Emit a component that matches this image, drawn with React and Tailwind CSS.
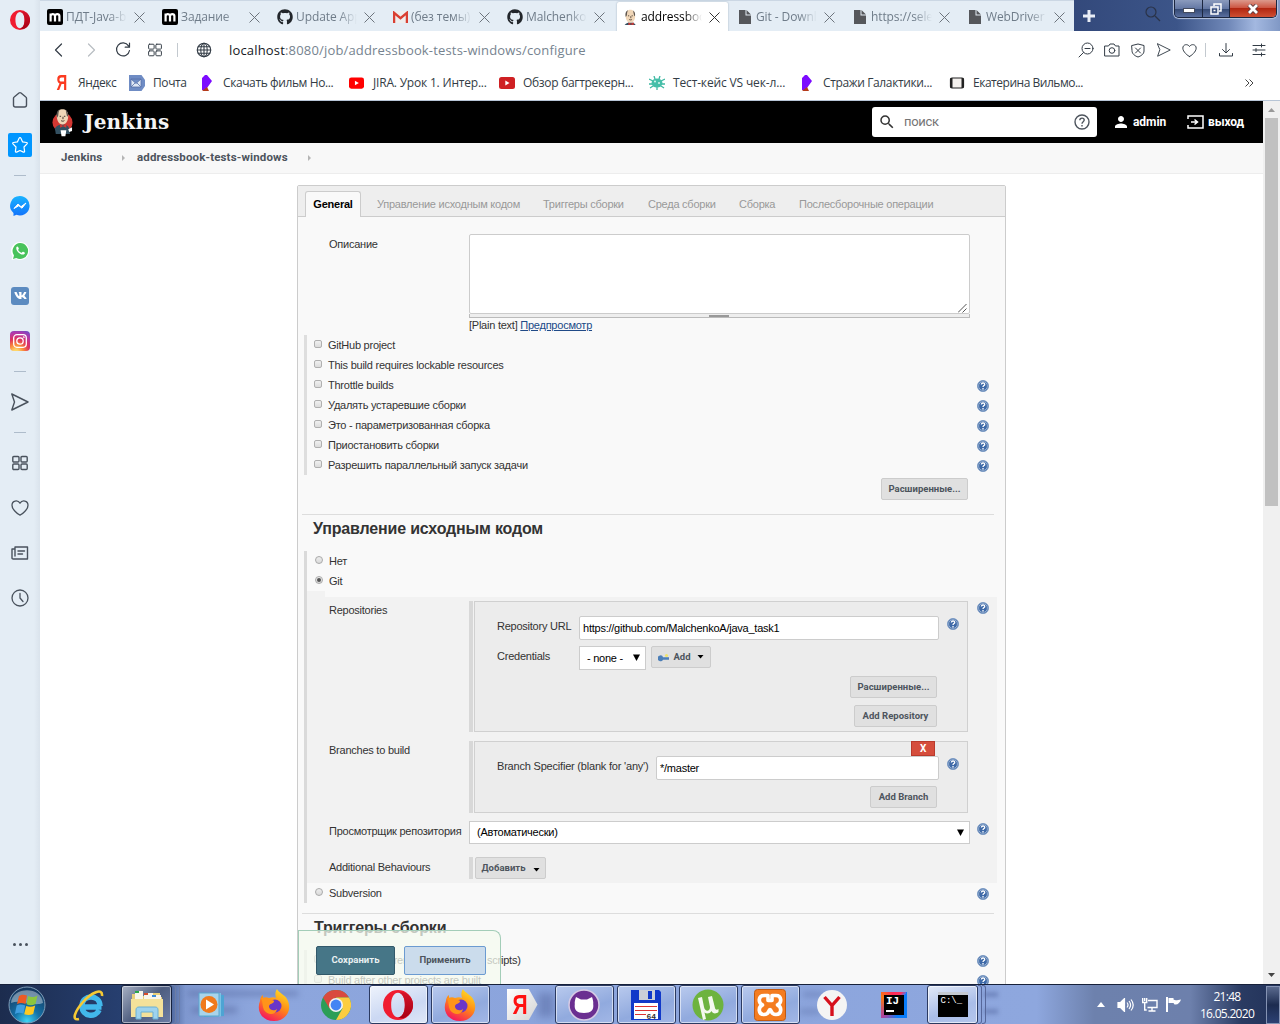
import React from "react";
import { FaGithub, FaVk } from "react-icons/fa";
import { MdPerson, MdSearch } from "react-icons/md";

const UI = "font-['Open_Sans','Noto_Sans',sans-serif]";

/* ---------- browser icons ---------- */

function Line({ size = 18, w = 1, className = "", children }) {
  return (
    <svg width={size} height={size} viewBox="0 0 18 18" fill="none" stroke="currentColor" strokeWidth={w} strokeLinecap="round" strokeLinejoin="round" className={"shrink-0 " + className}>
      {children}
    </svg>
  );
}

const shapes = {
  home: <path d="M2.500 7.200Q2.500 6.500 3.200 6L8 2q1-.7 2 0l4.800 4q.7.500.7 1.200v6.800a2 2 0 0 1-2 2h-9a2 2 0 0 1-2-2z" />,
  star: <path d="M9 1.500q.6 0 .9.700l1.600 3.600 4 .7q1.300.4.5 1.300l-3 3.200.6 4.300q0 1.200-1.200.8L9 14.500l-3.400 1.600q-1.200.4-1.200-.8l.6-4.300-3-3.200q-.8-.9.500-1.300l4-.7 1.600-3.600q.3-.7.9-.7z" />,
  send: <path d="M.8 1 17 9 .8 17l2.700-8z" />,
  grid: (
    <>
      <rect x="1.800" y="2.500" width="6.200" height="5.500" rx="1" />
      <rect x="10" y="2.500" width="6.200" height="5.500" rx="1" />
      <rect x="1.800" y="10" width="6.200" height="5.500" rx="1" />
      <rect x="10" y="10" width="6.200" height="5.500" rx="1" />
    </>
  ),
  heart: <path d="M9 16.200C7 15.500 1 10.500 1 6.200 1 1.500 6.800.6 9 4.200 11.200.6 17 1.500 17 6.200c0 4.300-6 9.300-8 10z" />,
  news: <path d="M4 3h12.500v12H2.200C1.500 15 1 14.500 1 14V5h3zM4 5v7M7 7h6.500M7 10h4.500" />,
  clock: (
    <>
      <circle cx="9" cy="9" r="8" />
      <path d="M9 4.500V9l3 3.500" />
    </>
  ),
  back: <path d="M11.500 3 5.500 9l6 6" />,
  forward: <path d="M6.500 3l6 6-6 6" />,
  reload: <path d="M14.500 4.800A6.500 6.500 0 1 0 15.500 9.500M15.500 2v4.200h-4.300" />,
  globe: (
    <>
      <circle cx="9" cy="9" r="6.700" />
      <ellipse cx="9" cy="9" rx="3.200" ry="6.700" />
      <path d="M2.300 9h13.400M3.200 5.700h11.600M3.200 12.300h11.600M9 2.300v13.400" />
    </>
  ),
  zoomOut: (
    <>
      <circle cx="10.500" cy="7.500" r="5.500" />
      <path d="M8 7.500h5M6.500 11.500 2 16" />
    </>
  ),
  camera: (
    <>
      <path d="M2 5h3.500L7 3h4l1.500 2H16v10H2z" />
      <circle cx="9" cy="9.500" r="2.800" />
    </>
  ),
  shield: (
    <>
      <path d="M3 4.500 9 3l6 1.500V10c0 3-3 5-6 6-3-1-6-3-6-6z" />
      <path d="M6.500 7l5 5M11.500 7l-5 5" />
    </>
  ),
  download: <path d="M9 2.500v9M5.500 8.500 9 12l3.500-3.500M2.500 12.500V15h13v-2.500" />,
  sliders: <path d="M3 4.500h12M3 9h12M3 13.500h12M11.500 3v3M6 7.500v3M11.500 12v3" />,
};

function OperaLogo({ size, id }) {
  return (
    <svg width={size} height={size} viewBox="0 0 32 32">
      <defs>
        <linearGradient id={id} x1="0" y1="0" x2="0" y2="1">
          <stop offset="0" stopColor="#d5142a" />
          <stop offset="1" stopColor="#a70014" />
        </linearGradient>
      </defs>
      <path fillRule="evenodd" fill="#f01c30" d="M16 0a16 16 0 1 0 0 32 16 16 0 0 0 0-32M16 3c5 0 7.300 6 7.300 13S21 29 16 29 8.700 23 8.700 16 11 3 16 3" />
      <path fill={"url(#" + id + ")"} d="M16 3c4-1.500 8-.5 10.500 1.500C34 11 34 21 26.500 27.500 23 30.500 19 31 16 29c5 0 7.300-6 7.300-13S21 3 16 3" />
    </svg>
  );
}

function MTile() {
  return (
    <span className="flex h-4 w-4 items-center justify-center rounded-[2px] bg-black">
      <svg width="12" height="10" viewBox="0 0 12 10" fill="none" stroke="#fff" strokeWidth="2.200">
        <path d="M1.600 9.500V1.500M1.600 4c0-2.500 4.400-2.500 4.400 0v5.500M6 4c0-2.500 4.400-2.500 4.400 0v5.500" />
      </svg>
    </span>
  );
}

function Gmail() {
  return (
    <svg width="15" height="12" viewBox="0 0 15 12" className="ml-px">
      <rect width="15" height="12" rx="1" fill="#eee" />
      <path d="M1.100 12V1.800l6.400 5.400 6.400-5.400V12" fill="none" stroke="#d93f32" strokeWidth="2.300" />
    </svg>
  );
}

function PageIcon() {
  return (
    <svg width="12" height="14" viewBox="0 0 12 14" className="ml-[2px]" fill="#55575b">
      <path d="M0 0h6.500v5.500H12V14H0zM7.500 0 12 4.500H7.500z" />
    </svg>
  );
}

function Butler({ width = 22, height = 30, crop }) {
  return (
    <svg width={width} height={height} viewBox={crop ? "2 0 17 20" : "0 0 22 30"}>
      {!crop && <circle cx="11" cy="15" r="10.500" fill="#d33833" />}
      <path d="M3 21c2-3 5-4 8-4s6 1 7 4l1 6H4z" fill="#335061" />
      <path d="M5 8C5 3 8 1 11 1s6 2 6 7c0 5-2 9-6 9S5 13 5 8" fill="#f0d6b7" />
      <path d="M5.300 10C4 5 6 2 8 1.500 6.500 4 7 6 6.500 8zM16.500 9c1-3 0-5-2-7 0 3 1 4 1 6z" fill="#5d5650" />
      <path d="M8 8.500h1.500M12.500 8.500H14M9.500 13c1 .8 2.500.8 3.500 0M11.500 9v2.500" stroke="#2b211b" strokeWidth=".9" fill="none" />
      <path d="M8.500 17l3 1.500 3.500-2v4L11.500 19l-3 1.500z" fill="#d33833" />
      <path d="M9 23h6l-1 6.500h-4zM17 22l4-2v4l-3 1z" fill="#fff" />
    </svg>
  );
}

/* ---------- tab strip ---------- */

const tabs = [
  ["m", "ПДТ-Java-b"],
  ["m", "Задание"],
  ["gh", "Update App"],
  ["gmail", "(без темы)"],
  ["gh", "Malchenko/"],
  ["jenkins", "addressboo"],
  ["page", "Git - Downl"],
  ["page", "https://sele"],
  ["page", "WebDriver"],
];

function TabGlyph({ kind }) {
  if (kind === "m") return <MTile />;
  if (kind === "gh") return <FaGithub size={16} color="#22262b" />;
  if (kind === "gmail") return <Gmail />;
  if (kind === "jenkins") return <Butler width={14} height={16} crop />;
  return <PageIcon />;
}

function BrowserTab({ kind, label, active, sep }) {
  return (
    <div className={"flex w-[115px] shrink-0 pt-px " + (active ? "pl-[2px]" : "")}>
      <div className={"flex h-[30px] w-full items-center overflow-hidden " + (active ? "mr-[2px] rounded-t-[2px] bg-white pl-[6px] shadow-[0_0_2px_#9ab]" : "pl-[7px]")}>
        <span className={"flex h-5 shrink-0 items-center overflow-hidden " + (active ? "w-[15px]" : "w-[16px]")}>
          <TabGlyph kind={kind} />
        </span>
        <span className={"ml-[3px] w-[61px] shrink-0 overflow-hidden whitespace-nowrap text-[12px] tracking-[-0.1px] mask-r-from-70% " + (active ? "text-black" : "text-[#6f7c89]")}>{label}</span>
        <svg width="11" height="11" viewBox="0 0 11 11" className={"ml-[7px] shrink-0 " + (active ? "text-[#333]" : "text-[#6d747c]")} stroke="currentColor" fill="none">
          <path d="M.5.5l10 10M10.500.5l-10 10" />
        </svg>
        {sep && <span className="ml-[10px] h-4 w-px shrink-0 bg-[#a9b6c3]" />}
      </div>
    </div>
  );
}

function TabStrip() {
  return (
    <div className="flex h-[31px] bg-[#3d5689]">
      <div className="flex w-[1034px] border-t border-[#cbd7e4] bg-[#e4edf5]">
        {tabs.map(([kind, label], i) => (
          <BrowserTab key={i} kind={kind} label={label} active={i === 5} sep={i !== 4 && i !== 5 && i !== 8} />
        ))}
      </div>
      <div className="flex flex-1 bg-[linear-gradient(90deg,#33497b,#3c5589_50%,#7088b8_75%,#a3b8e0_88%,#8098c5)]">
        <svg width="12" height="12" viewBox="0 0 12 12" className="mt-[10px] ml-[9px]" stroke="#e9eef6" strokeWidth="3">
          <path d="M6 0v12M0 6h12" />
        </svg>
        <svg width="16" height="16" viewBox="0 0 16 16" className="mt-[6px] ml-[50px]" fill="none" stroke="#2a3348" strokeWidth="1.200">
          <circle cx="6" cy="6" r="5" />
          <path d="M10 10l5 5" />
        </svg>
        <div className="ml-[13px] flex h-[18px] w-[103px] overflow-hidden rounded-b-[5px] border border-t-0 border-[#1c2740] shadow-[0_0_1px_1px_#b9c6df]">
          <span className="flex w-[28px] items-center justify-center border-r border-[#1c2740] bg-[linear-gradient(#8b9bbd,#6478a4_50%,#324771_51%,#5a6f9f)] pt-[3px]">
            <span className="h-[5px] w-[12px] border border-[#444b5e] bg-white" />
          </span>
          <span className="flex w-[27px] items-center justify-center border-r border-[#1c2740] bg-[linear-gradient(#8b9bbd,#6478a4_50%,#324771_51%,#5a6f9f)]">
            <svg width="12" height="12" viewBox="0 0 12 12" fill="none" stroke="#fff" strokeWidth="1.500">
              <path d="M4 3V1h7v7H9" />
              <rect x="1" y="4" width="7" height="7" />
              <path d="M3.500 7.500h2" />
            </svg>
          </span>
          <span className="flex flex-1 items-center justify-center bg-[linear-gradient(#dc9a8c,#cd5743_45%,#b22711_50%,#cf4f33)]">
            <svg width="12" height="10" viewBox="0 0 12 10" fill="none">
              <path d="M2 1l8 8M10 1 2 9" stroke="#5b3b40" strokeWidth="4.500" />
              <path d="M2 1l8 8M10 1 2 9" stroke="#fff" strokeWidth="2.800" />
            </svg>
          </span>
        </div>
      </div>
    </div>
  );
}

/* ---------- address and bookmarks ---------- */

function AddressBar() {
  return (
    <div className="flex h-[38px] items-center bg-white pl-[10px] text-[#333c46]">
      <Line w={1.2}>{shapes.back}</Line>
      <Line w={1.2} className="ml-[14px] text-[#b8bdc2]">{shapes.forward}</Line>
      <Line w={1.2} className="ml-[14px]">{shapes.reload}</Line>
      <Line size={16} w={1.1} className="ml-[15px]">{shapes.grid}</Line>
      <span className="ml-[14px] h-[14px] w-px bg-[#c3c9cf]" />
      <Line w={1.1} className="ml-[17px]">{shapes.globe}</Line>
      <span className="ml-[16px] text-[13px] leading-[18px] tracking-[0.17px] whitespace-nowrap text-[#76838f]">
        <span className="text-[#15191d]">localhost</span>:8080/job/addressbook-tests-windows/configure
      </span>
      <div className="ml-auto flex items-center pr-[12px]">
        <Line>{shapes.zoomOut}</Line>
        <Line className="ml-[8px]">{shapes.camera}</Line>
        <Line className="ml-[8px]">{shapes.shield}</Line>
        <Line size={14} w={1.2} className="ml-[10px]">{shapes.send}</Line>
        <Line size={15} w={1.2} className="ml-[11px]">{shapes.heart}</Line>
        <span className="ml-[8px] h-[14px] w-px bg-[#c3c9cf]" />
        <Line className="ml-[11px]">{shapes.download}</Line>
        <Line className="ml-[15px]">{shapes.sliders}</Line>
      </div>
    </div>
  );
}

function PurpleMark() {
  return (
    <svg width="16" height="16" viewBox="0 0 16 16">
      <path d="M3 3 6 0h2l5 6-5 7-1 2H3z" fill="#7c0bff" />
      <path d="M3 16l5-4 2 4z" fill="#b53a1b" />
    </svg>
  );
}

function YouTube({ color, w }) {
  return (
    <svg width={w} height="12" viewBox="0 0 16 12">
      <rect width="16" height="12" rx="2.500" fill={color} />
      <path d="M6.300 3.500v5l4.200-2.500z" fill="#fff" />
    </svg>
  );
}

const bookmarks = [
  ["Яндекс", "w-[75px]", "tracking-[-0.4px]", <span className="inline-block scale-x-[.68] font-['Liberation_Sans',sans-serif] text-[22px] leading-4 font-bold text-[#fb3a20]">Я</span>],
  ["Почта", "w-[70px]", "tracking-[-0.4px]", (
    <svg width="16" height="16" viewBox="0 0 16 16">
      <path d="M0 0h12.500L16 5v6l-3.500 5H0z" fill="#6f8cc4" />
      <path d="M2 4h10v8H2zM2 4l5 4.500L12 4M2 12l4-4M12 12 8 8" fill="#dfe7f4" stroke="#5570a8" strokeWidth=".8" />
    </svg>
  )],
  ["Скачать фильм Но...", "w-[150px]", "tracking-[-0.4px]", <PurpleMark />],
  ["JIRA. Урок 1. Интер...", "w-[150px]", "tracking-[-0.2px]", <YouTube color="#f00" w={15} />],
  ["Обзор багтрекерн...", "w-[150px]", "tracking-[-0.3px]", <YouTube color="#cf2023" w={16} />],
  ["Тест-кейс VS чек-л...", "w-[150px]", "tracking-[-0.15px]", (
    <svg width="16" height="14" viewBox="0 0 16 14" stroke="#3fb8a2" strokeWidth="1.300">
      <path d="M0 3l4 2M0 8h4M1 12l3-2M16 3l-4 2M16 8h-4M15 12l-3-2M5 0l1 3M11 0l-1 3M8 11v3" />
      <ellipse cx="8" cy="7" rx="5.500" ry="4.500" fill="#45bfa9" stroke="none" />
      <circle cx="6" cy="5.500" r="1" fill="#d8f4ee" stroke="none" />
      <circle cx="10" cy="7" r="1" fill="#d8f4ee" stroke="none" />
    </svg>
  )],
  ["Стражи Галактики...", "w-[150px]", "tracking-[-0.37px]", <PurpleMark />],
  ["Екатерина Вильмо...", "w-[150px]", "tracking-[-0.48px]", (
    <svg width="16" height="14" viewBox="0 0 16 14">
      <rect x="1.500" y="2" width="13" height="10" rx="1.500" fill="#f4f1ee" stroke="#222" strokeWidth="1.200" />
      <path d="M2.500 2v10M13.500 2v10" stroke="#222" strokeWidth="2" />
    </svg>
  )],
];

function Bookmarks() {
  return (
    <div className="flex h-[32px] items-center border-b border-[#b7c5d6] bg-white pb-[4px] pl-[14px]">
      {bookmarks.map(([label, w, track, glyph]) => (
        <div key={label} className={"flex shrink-0 items-center " + w}>
          <span className="flex w-6 shrink-0 items-center">{glyph}</span>
          <span className={"text-[12px] leading-4 whitespace-nowrap text-[#333c45] " + track}>{label}</span>
        </div>
      ))}
      <svg width="9" height="8" viewBox="0 0 9 8" className="mr-[26px] ml-auto" fill="none" stroke="#444">
        <path d="M.5.5 4 4 .5 7.500M4.500.5 8 4 4.500 7.500" />
      </svg>
    </div>
  );
}

/* ---------- opera sidebar ---------- */

function Cell({ children }) {
  return <div className="flex h-[45px] shrink-0 items-center justify-center">{children}</div>;
}

function Dash({ className }) {
  return (
    <div className={"flex shrink-0 items-center justify-center " + className}>
      <span className="h-px w-3 bg-[#aebccb]" />
    </div>
  );
}

function Sidebar() {
  return (
    <div className="flex w-10 shrink-0 flex-col bg-[linear-gradient(90deg,#e4edf5_85%,#dae3ec)] text-[#49525d]">
      <div className="flex h-[77px] shrink-0 justify-center pt-[10px]">
        <OperaLogo size={20} id="opera-side" />
      </div>
      <Cell><Line w={1.4}>{shapes.home}</Line></Cell>
      <Cell>
        <span className="flex h-6 w-6 items-center justify-center rounded-[2px] bg-[#0096ff] text-white">
          <Line w={1.2}>{shapes.star}</Line>
        </span>
      </Cell>
      <Dash className="h-[16px]" />
      <Cell>
        <svg width="20" height="20" viewBox="0 0 20 20">
          <defs>
            <linearGradient id="msg" x1="0" y1="0" x2="0" y2="1">
              <stop offset="0" stopColor="#19b3ff" />
              <stop offset="1" stopColor="#1273fb" />
            </linearGradient>
          </defs>
          <path d="M10 0a9.700 9.700 0 1 1-3.500 18.800L3.500 20v-3A9.700 9.700 0 0 1 10 0" fill="url(#msg)" />
          <path d="M4 12.500 8 8l3 2.700L16 7l-4 5.200-3.200-2.500z" fill="#fff" stroke="#fff" />
        </svg>
      </Cell>
      <Cell>
        <svg width="18" height="18" viewBox="0 0 18 18">
          <path d="M9 0a9 9 0 1 1-4 17L.5 18 1.500 14A9 9 0 0 1 9 0" fill="#fff" />
          <path d="M9.200 1a8 8 0 1 1-4 15L2 17l1-3.500A8 8 0 0 1 9.200 1" fill="#49c35c" />
          <path d="M5.500 5c1-1.300 1.700-.4 2.300 1.500.2.700-1 1-.5 1.700.8 1.300 1.800 2.100 3 2.500.7.200 1-1.400 1.800-1 2 .8 2.300 1.300 1.300 2.300C10.500 14.300 4 9 5.500 5" fill="#fff" />
        </svg>
      </Cell>
      <Cell>
        <span className="flex h-[18px] w-[18px] items-center justify-center rounded-[3px] bg-[#5c8bc0]">
          <FaVk size={13} color="#fff" />
        </span>
      </Cell>
      <Cell>
        <span className="flex h-5 w-5 items-center justify-center rounded-[4px] bg-[radial-gradient(circle_at_30%_107%,#fdd66a_10%,#fa8a3c_30%,#e0335b_52%,#b637a8_75%,#5b53d0_100%)]">
          <svg width="14" height="14" viewBox="0 0 14 14" fill="none" stroke="#fff" strokeWidth="1.300">
            <rect x=".7" y=".7" width="12.600" height="12.600" rx="3.200" />
            <circle cx="7" cy="7" r="3.200" />
            <circle cx="10.700" cy="3.300" r=".3" />
          </svg>
        </span>
      </Cell>
      <Dash className="h-[16px]" />
      <Cell><Line w={1.4}>{shapes.send}</Line></Cell>
      <Dash className="h-[16px]" />
      <Cell><Line w={1.4} className="-ml-px">{shapes.grid}</Line></Cell>
      <Cell><Line w={1.3} className="-ml-px">{shapes.heart}</Line></Cell>
      <Cell><Line w={1.4} className="-ml-px">{shapes.news}</Line></Cell>
      <Cell><Line w={1.3} className="-ml-px">{shapes.clock}</Line></Cell>
      <div className="mt-auto mb-[38px] flex justify-center gap-[3px]">
        <span className="h-[3px] w-[3px] rounded-full bg-[#49525d]" />
        <span className="h-[3px] w-[3px] rounded-full bg-[#49525d]" />
        <span className="h-[3px] w-[3px] rounded-full bg-[#49525d]" />
      </div>
    </div>
  );
}

/* ---------- jenkins page ---------- */

function JenkinsHeader() {
  return (
    <div className="flex h-[42px] shrink-0 items-center bg-black pl-[12px] font-['Roboto',sans-serif] text-[12px] font-bold text-white">
      <Butler width={21} height={29} />
      <span className="ml-[11px] w-[100px] font-['DejaVu_Serif',serif] text-[20px] leading-[26px] font-bold tracking-[0.2px] text-[#f4f4f4]">Jenkins</span>
      <div className="ml-auto flex h-[30px] w-[225px] items-center rounded-[3px] bg-white pr-[7px] pl-[6px]">
        <MdSearch size={18} color="#333" />
        <span className="ml-[8px] flex-1 text-[13px] font-normal tracking-[-0.3px] text-[#757575]">поиск</span>
        <svg width="16" height="16" viewBox="0 0 16 16" fill="none" stroke="#4d545d" strokeWidth="1.400">
          <circle cx="8" cy="8" r="7" />
          <path d="M5.800 6.300c0-3 4.400-2.700 4.400-.2C10.200 7.700 8 7.700 8 9.700M8 11v1.400" />
        </svg>
      </div>
      <MdPerson size={18} className="ml-[15px]" />
      <span className="ml-[3px] w-[33px] tracking-[-0.05px]">admin</span>
      <svg width="17" height="14" viewBox="0 0 17 14" fill="none" stroke="#fff" strokeWidth="1.500" className="ml-[21px]">
        <path d="M1 4V1h15v12H1v-3M4 7h6M7.500 4.500l3 2.500-3 2.500" />
      </svg>
      <span className="mr-[19px] ml-[4px] w-[36px] tracking-[-0.1px]">выход</span>
    </div>
  );
}

function Caret() {
  return (
    <svg width="3" height="6" viewBox="0 0 3 6" fill="#b5b5b5">
      <path d="M0 0l3 3-3 3z" />
    </svg>
  );
}

function Breadcrumbs() {
  return (
    <div className="flex h-[31px] shrink-0 items-center border-b border-[#ededed] bg-[#f8f8f8] pl-[21px] font-['Roboto',sans-serif] text-[11.5px] font-bold text-[#4d545d]">
      <span className="mr-[18px] w-[43px] tracking-[0.1px]">Jenkins</span>
      <Caret />
      <span className="mr-[18px] ml-[12px] w-[153px] tracking-[0.15px] whitespace-nowrap">addressbook-tests-windows</span>
      <Caret />
    </div>
  );
}

function Help({ className = "" }) {
  return (
    <svg width="12" height="12" viewBox="0 0 12 12" className={"shrink-0 " + className}>
      <circle cx="6" cy="6" r="5.500" fill="#2f5c9c" stroke="#7d9cc5" />
      <circle cx="6" cy="6" r="4.400" fill="#3f6aa8" stroke="#bccde3" strokeWidth=".7" />
      <path d="M4.400 4.500c0-2 3.300-2 3.300-.1 0 1.200-1.700 1.200-1.700 2.600M6 8v1.400" fill="none" stroke="#fff" strokeWidth="1.300" />
    </svg>
  );
}

function Button({ className = "", children }) {
  return (
    <span className={"flex h-[22px] shrink-0 items-center justify-center rounded-[2px] border border-[#ccc] bg-[#e0e0e0] font-['Roboto',sans-serif] text-[9.5px] font-bold tracking-[0.02px] whitespace-nowrap text-[#4d545d] " + className}>
      {children}
    </span>
  );
}

function Check() {
  return <span className="mb-[2px] h-2 w-2 shrink-0 rounded-[2px] border border-[#b0b0b0] bg-[linear-gradient(#f1f1f1,#dcdcdc)]" />;
}

function Radio({ on }) {
  return (
    <span className="mb-[2px] flex h-2 w-2 shrink-0 items-center justify-center rounded-full border border-[#aaa] bg-[linear-gradient(#ededed,#dadada)]">
      {on && <span className="h-[4px] w-[4px] rounded-full bg-[#555]" />}
    </span>
  );
}

function Arrow({ className = "" }) {
  return (
    <svg width="7" height="4" viewBox="0 0 7 4" className={className}>
      <path d="M.5 0h6l-3 3.500z" fill="#000" />
    </svg>
  );
}

function SelectArrow({ className = "" }) {
  return (
    <svg width="7" height="7" viewBox="0 0 7 7" className={className}>
      <path d="M0 .5h7L3.500 7z" fill="#000" />
    </svg>
  );
}

const options = [
  ["GitHub project", false],
  ["This build requires lockable resources", false],
  ["Throttle builds", true],
  ["Удалять устаревшие сборки", true],
  ["Это - параметризованная сборка", true],
  ["Приостановить сборки", true],
  ["Разрешить параллельный запуск задачи", true],
];

function OptionRow({ label, help, radio, on }) {
  return (
    <div className="flex h-5 items-center">
      <span className={"flex " + (radio ? "ml-[8px]" : "ml-[7px]")}>{radio ? <Radio on={on} /> : <Check />}</span>
      <span className="ml-[6px] whitespace-nowrap">{label}</span>
      {help && <Help className="mt-[2px] mr-[16px] ml-auto" />}
    </div>
  );
}

const sectionTabs = [
  ["Управление исходным кодом", "w-[166px]"],
  ["Триггеры сборки", "w-[105px]"],
  ["Среда сборки", "w-[91px]"],
  ["Сборка", "w-[60px]"],
  ["Послесборочные операции", "w-[140px]"],
];

function TextField({ className, children }) {
  return <div className={"flex h-6 items-center rounded-[2px] border border-[#ccc] bg-white pl-[3px] text-black " + className}>{children}</div>;
}

function GitSettings() {
  return (
    <div className="flex h-[292px]">
      <div className="w-[18px] bg-[#f2f2f2]" />
      <div className="mt-[6px] flex w-[672px] flex-col bg-[#f2f2f2] pt-[4px] pl-[4px]">
        <div className="flex h-[140px]">
          <span className="w-[140px] leading-[18px]">Repositories</span>
          <div className="h-[131px] w-[4px] bg-[#d8d8d8]" />
          <div className="ml-px flex h-[131px] w-[494px] flex-col border border-[#d0d0d0] bg-[#ececec] pt-[14px] pl-[22px]">
            <div className="flex h-[30px]">
              <span className="w-[82px] leading-[20px]">Repository URL</span>
              <TextField className="w-[360px]">https://github.com/MalchenkoA/java_task1</TextField>
              <Help className="mt-[2px] ml-[8px]" />
            </div>
            <div className="flex h-[30px]">
              <span className="w-[82px] leading-[20px]">Credentials</span>
              <div className="flex h-6 w-[67px] items-center border border-[#ccc] bg-white pl-[7px] text-black">
                - none -
                <SelectArrow className="mr-[5px] mb-px ml-auto" />
              </div>
              <Button className="ml-[5px] w-[60px]">
                <svg width="12" height="9" viewBox="0 0 12 9" className="mr-[3px]">
                  <path d="M0 5a2.500 2.200 0 0 1 5-.8h6v2.600H5A2.500 2.200 0 0 1 0 5" fill="#4c7fb8" />
                  <circle cx="8.500" cy="2.500" r="1.600" fill="#f0e46a" />
                </svg>
                Add
                <Arrow className="ml-[6px]" />
              </Button>
            </div>
            <div className="flex w-[440px] flex-col items-end">
              <Button className="w-[87px]">Расширенные...</Button>
              <Button className="mt-[7px] w-[83px]">Add Repository</Button>
            </div>
          </div>
          <Help className="mt-px ml-[9px]" />
        </div>
        <div className="flex h-[80px]">
          <span className="w-[140px] leading-[18px]">Branches to build</span>
          <div className="h-[72px] w-[4px] bg-[#d8d8d8]" />
          <div className="ml-px flex h-[72px] w-[494px] flex-col border border-[#d0d0d0] bg-[#ececec] pl-[22px]">
            <span className="-mt-px ml-[414px] flex h-[15px] w-6 items-center justify-center border border-[#b93a2c] bg-[#d54d3c] font-['Roboto',sans-serif] text-[10px] font-bold text-white">X</span>
            <div className="flex h-[30px]">
              <span className="w-[159px] leading-[20px] tracking-[-0.2px] whitespace-nowrap">Branch Specifier (blank for &apos;any&apos;)</span>
              <TextField className="w-[283px]">*/master</TextField>
              <Help className="mt-[2px] ml-[8px]" />
            </div>
            <Button className="ml-[373px] w-[67px]">Add Branch</Button>
          </div>
        </div>
        <div className="flex h-[36px]">
          <span className="w-[140px] leading-[20px] whitespace-nowrap">Просмотрщик репозитория</span>
          <div className="flex h-[23px] w-[501px] items-center border border-[#ccc] bg-white pb-px pl-[7px] text-black">
            (Автоматически)
            <SelectArrow className="mr-[5px] ml-auto" />
          </div>
          <Help className="mt-[2px] ml-[7px]" />
        </div>
        <div className="flex">
          <span className="w-[140px] leading-[20px]">Additional Behaviours</span>
          <div className="h-[22px] w-[4px] bg-[#d8d8d8]" />
          <Button className="ml-[2px] h-[21px] w-[71px]">
            Добавить
            <Arrow className="mt-[3px] ml-[7px]" />
          </Button>
        </div>
      </div>
    </div>
  );
}

function ConfigPanel() {
  return (
    <div className="mt-[11px] ml-[257px] flex h-[900px] w-[709px] shrink-0 flex-col rounded-t-[2px] border border-[#ccc] bg-[#f9f9f9] text-[#333]">
      <div className="flex h-[31px] shrink-0 items-end border-b border-[#ccc] bg-[#eee] pl-[7px] text-[#999]">
        <span className="mr-[16px] -mb-px flex h-[26px] w-[56px] items-center justify-center rounded-t-[3px] border border-b-0 border-[#ccc] bg-[#f9f9f9] font-bold text-black">General</span>
        {sectionTabs.map(([label, w]) => (
          <span key={label} className={"h-[25px] leading-[26px] whitespace-nowrap " + w}>{label}</span>
        ))}
      </div>

      <div className="flex h-[118px] shrink-0 pt-[17px] pl-[31px]">
        <span className="w-[140px] leading-[20px]">Описание</span>
        <div className="w-[501px]">
          <div className="flex h-[80px] items-end justify-end rounded-[2px] border border-[#ccc] bg-white">
            <svg width="9" height="9" viewBox="0 0 9 9" stroke="#555" className="mr-[2px]">
              <path d="M0 8.500 8.500 0M4.500 8.500l4-4" />
            </svg>
          </div>
          <div className="flex h-[4px] justify-center border border-t-0 border-[#bbb] bg-[#eee] pr-[2px]">
            <span className="mt-px h-[2px] w-5 bg-[#999]" />
          </div>
          <div className="leading-[15px]">
            [Plain text] <span className="text-[#204a87] underline">Предпросмотр</span>
          </div>
        </div>
      </div>

      <div className="ml-[6px] shrink-0 border-l-[3px] border-[#dedede]">
        {options.map(([label, help]) => (
          <OptionRow key={label} label={label} help={help} />
        ))}
      </div>
      <Button className="mt-[3px] ml-[583px] h-[21px] w-[87px]">Расширенные...</Button>

      <div className="mt-[14px] ml-[4px] h-px w-[692px] shrink-0 bg-[#ddd]" />
      <h2 className="mt-[3px] ml-[15px] h-[33px] shrink-0 text-[16px] leading-[22px] font-bold tracking-[-0.17px] whitespace-nowrap">Управление исходным кодом</h2>
      <div className="ml-[6px] shrink-0 border-l-[3px] border-[#dadada]">
        <OptionRow radio label="Нет" />
        <OptionRow radio on label="Git" />
        <div className="flex">
          <GitSettings />
        </div>
        <OptionRow radio help label="Subversion" />
      </div>

      <div className="mt-[10px] ml-[4px] h-px w-[692px] shrink-0 bg-[#ddd]" />
      <h2 className="mt-[3px] ml-[16px] h-[33px] shrink-0 text-[16px] leading-[22px] font-bold tracking-[-0.17px] whitespace-nowrap">Триггеры сборки</h2>
      <div className="ml-[6px] border-l-[3px] border-[#dedede]">
        <OptionRow help label="Trigger builds remotely (e.g., from scripts)" />
        <OptionRow help label="Build after other projects are built" />
      </div>
    </div>
  );
}

function SaveBar() {
  return (
    <div className="absolute bottom-0 left-[258px] flex h-[54px] w-[203px] rounded-tr-[8px] border border-b-0 border-[#a3cdb8] bg-[#f4f9ef]/75 pt-[15px] pl-[17px] font-['Roboto',sans-serif] text-[9.5px] font-bold tracking-[0.05px]">
      <span className="flex h-[29px] w-[79px] items-center justify-center rounded-[2px] border border-[#32596a] bg-[#467687] text-[#e9f0f2]">Сохранить</span>
      <span className="ml-[9px] flex h-[29px] w-[82px] items-center justify-center rounded-[2px] border border-[#6b9bd1] bg-[#cbdcec] text-[#4d545d]">Применить</span>
    </div>
  );
}

function JenkinsPage() {
  return (
    <div className="flex min-h-0 flex-1 overflow-hidden bg-white">
      <div className="relative flex w-[1223px] flex-col overflow-hidden font-['Liberation_Sans',Arial,sans-serif] text-[11px] tracking-[-0.24px]">
        <JenkinsHeader />
        <Breadcrumbs />
        <ConfigPanel />
        <SaveBar />
      </div>
      <div className="flex w-[17px] flex-col items-center bg-[#f0f0f0]">
        <svg width="7" height="4" viewBox="0 0 7 4" className="mt-[7px]" fill="#999">
          <path d="M0 4 3.500 0 7 4z" />
        </svg>
        <div className="mt-[6px] mr-px h-[388px] w-[13px] bg-[#c1c1c1]" />
        <svg width="7" height="4" viewBox="0 0 7 4" className="mt-auto mb-[7px]" fill="#444">
          <path d="M0 0h7L3.500 4z" />
        </svg>
      </div>
    </div>
  );
}

/* ---------- taskbar ---------- */

function Task({ open, bright, className = "", children }) {
  return (
    <div className={"flex h-full w-[62px] shrink-0 items-center justify-center " + className}>
      {open ? (
        <span className={"flex h-[39px] w-[59px] items-center justify-center rounded-[3px] border border-[#2b3a61] shadow-[inset_0_0_0_1px_#ffffff90] " + (bright ? "bg-[linear-gradient(160deg,#eef3fc,#cbd8f3_60%,#dfe7f8)]" : "bg-[linear-gradient(160deg,#b9caee,#91aade_60%,#a2b7e6)]")}>
          {children}
        </span>
      ) : (
        children
      )}
    </div>
  );
}

function Firefox() {
  return (
    <svg width="32" height="32" viewBox="0 0 32 32">
      <defs>
        <linearGradient id="ff" x1=".8" y1="0" x2=".3" y2="1">
          <stop offset="0" stopColor="#ffe226" />
          <stop offset=".5" stopColor="#ff8a16" />
          <stop offset="1" stopColor="#f5145f" />
        </linearGradient>
      </defs>
      <path d="M19 0c2 4 8 6 10 10 6 11-1 22-13 22C4 32-2 22 2 12c0-2 1-5 3-6v3c2-1 4-1 6 0 3-1 5-1 7 0-1-3-1-6 1-9" fill="url(#ff)" />
      <circle cx="17" cy="17" r="6.500" fill="#6a36c9" />
      <path d="M3 9c5-1 6 2 10 2 3 0 4 1 2 3-2 1-4 1-4 4 1 4 6 4 8 2-1 6-9 7-13 1C4 17 5 13 3 9" fill="#ff9419" />
    </svg>
  );
}

function Chrome() {
  return (
    <svg width="30" height="30" viewBox="0 0 30 30">
      <circle cx="15" cy="15" r="15" fill="#2c9e57" />
      <path d="M2 7.500A15 15 0 0 1 28 7.500H15L8.500 18.500z" fill="#d94a3e" />
      <path d="M21.500 18.500 15 30A15 15 0 0 0 28 7.500H15z" fill="#fccd3f" />
      <circle cx="15" cy="15" r="7" fill="#f3f3f3" />
      <circle cx="15" cy="15" r="5.400" fill="#4285f4" />
    </svg>
  );
}

function StartOrb() {
  return (
    <svg width="38" height="38" viewBox="0 0 38 38">
      <defs>
        <radialGradient id="orb" cx=".5" cy=".95" r=".9">
          <stop offset="0" stopColor="#3fd5f5" />
          <stop offset=".4" stopColor="#1472a8" />
          <stop offset="1" stopColor="#16375e" />
        </radialGradient>
      </defs>
      <circle cx="19" cy="19" r="18" fill="url(#orb)" stroke="#7f9db8" />
      <path d="M3 17C4 0 34 0 35 17c-10 4-22-4-32 0" fill="#fff" opacity=".4" />
      <path d="M11 10c3-2 5-1.500 8-.5l-1.500 8.500c-3-1-5-1.500-8.500 0z" fill="#ec5a24" />
      <path d="M20 10c3 1.500 6 1.500 9.500-.5L27.500 18c-3 1.500-6 1.500-9 .3z" fill="#8cc63e" />
      <path d="M8.700 19.500c3-1.500 5.300-1 8.500 0l-1.800 8c-3-1-5.500-1-8.500.5z" fill="#3f9ee0" />
      <path d="M18.200 20c3 1.200 6 1 9-.5l-2 8.500c-3 1.500-6 1.200-9 .3z" fill="#fdc921" />
    </svg>
  );
}

function Taskbar() {
  return (
    <div className={"relative flex h-10 shrink-0 items-center overflow-hidden border-t border-[#17213a] bg-[linear-gradient(90deg,#1c2c4e_0,#263e6e_9%,#2a4478_12.500%,#7f98d0_14.500%,#8da6dd_20%,#8ba4dc_45%,#8ea7de_81%,#6d81ad_85.500%,#6d80ac_93%,#2a3b62_97%,#22325a)] text-white " + UI}>
      <div className="absolute top-[6px] left-[188px] h-[5px] w-[110px] bg-[#53669b]/50 blur-[3px]" />
      <div className="absolute top-[22px] left-[192px] h-[6px] w-[45px] bg-[#53669b]/50 blur-[3px]" />
      <div className="absolute top-[8px] left-[538px] h-[24px] w-[16px] bg-[#5c70a8]/60 blur-[4px]" />
      <div className="absolute top-[7px] left-[803px] h-[5px] w-[20px] bg-[#5c70a8]/50 blur-[3px]" />
      <div className="absolute top-[24px] left-[800px] h-[5px] w-[20px] bg-[#5c70a8]/50 blur-[3px]" />
      <div className="absolute top-[7px] left-[984px] h-[5px] w-[14px] bg-[#5c70a8]/60 blur-[2px]" />
      <div className="absolute top-[24px] left-[984px] h-[5px] w-[14px] bg-[#5c70a8]/60 blur-[2px]" />
      <div className="relative flex h-full w-full items-center">
        <Task className="-ml-[4px]"><StartOrb /></Task>
        <Task>
          <svg width="32" height="32" viewBox="0 0 32 32" fill="none">
            <path d="M28.500 18H9M27 17c0-12-18-12-18 0 0 11 14 12 17 4" stroke="#42b8ec" strokeWidth="5.500" />
            <path d="M29 7c1-9-11-3-19 6S-2 32 6 30" stroke="#f6c934" strokeWidth="2.600" />
          </svg>
        </Task>
        <div className="ml-px flex h-[39px] w-[60px] shrink-0">
          <span className="flex w-[51px] items-center justify-center rounded-[3px] border border-[#16223f] bg-[linear-gradient(135deg,#a8b1c4,#4f5e80_50%,#6c7da6)] shadow-[inset_0_0_0_1px_#ffffff80]">
            <svg width="34" height="30" viewBox="0 0 34 30">
              <path d="M2 4h7l2 2h12V3h7v4h2v20H2z" fill="#e9cf79" />
              <path d="M5 1h8v8H5zM14 3h9v6h-9zM22 5h9v6h-9z" fill="#f8f5ea" />
              <path d="M5 1h4v2H5z" fill="#29a848" />
              <path d="M14 3h4v2h-4z" fill="#d84b2a" />
              <path d="M22 5h4v2h-4z" fill="#3c8bd9" />
              <path d="M1 9h32v18H1z" fill="#f4e19a" />
              <path d="M6 29v-9c0-2 1-3 3-3h16c2 0 3 1 3 3v9h-5v-7H11v7z" fill="#9ed3ee" stroke="#6ab0d4" />
            </svg>
          </span>
          <span className="w-[4px] rounded-r-[3px] border border-l-0 border-[#6c7da6]" />
          <span className="w-[4px] rounded-r-[3px] border border-l-0 border-[#6c7da6]" />
        </div>
        <Task>
          <svg width="28" height="26" viewBox="0 0 28 26">
            <path d="M6 2l20 1v21L6 25z" fill="#4ea4d3" />
            <path d="M3 1.500 23 1v23.500L3 24z" fill="#7cc2e5" />
            <path d="M1 1h20v23H1z" fill="#a9d4ea" stroke="#5ba6cf" />
            <circle cx="11" cy="12.500" r="8.500" fill="#f07a1c" />
            <path d="M8 7.500v10l8-5z" fill="#fff" />
          </svg>
        </Task>
        <Task><Firefox /></Task>
        <Task><Chrome /></Task>
        <Task open bright><OperaLogo size={30} id="opera-task" /></Task>
        <Task open><Firefox /></Task>
        <Task>
          <span className="flex h-[31px] w-[31px] items-center bg-[linear-gradient(135deg,#fff,#d3d3d3)] [clip-path:polygon(0_0,72%_0,100%_50%,72%_100%,0_100%)]">
            <span className="ml-[3px] inline-block scale-x-75 font-['Liberation_Sans',sans-serif] text-[28px] leading-[28px] font-bold text-[#f11]">Я</span>
          </span>
        </Task>
        <Task open>
          <svg width="32" height="32" viewBox="0 0 32 32">
            <circle cx="16" cy="16" r="15" fill="#6b2f91" stroke="#d6cbe4" strokeWidth="1.500" />
            <path d="M8 8l5 2.500h6L24 8c1 3 1.500 5 1.200 7 .8 6-2 9-9.200 9s-10-3-9.200-9C6.500 13 7 11 8 8" fill="#fff" />
          </svg>
        </Task>
        <Task open>
          <svg width="32" height="32" viewBox="0 0 32 32">
            <path d="M1 1h28l2 2v28H1z" fill="#1139c9" />
            <path d="M9 1h16v10H9z" fill="#cbd0d8" />
            <path d="M18 2h4v8h-4z" fill="#1139c9" />
            <path d="M4 14h24v16H4z" fill="#fff" />
            <path d="M5 17.500h22M5 21.500h22M5 25.500h11" stroke="#d33" />
            <text x="16.500" y="29.500" fontFamily="Liberation Mono, monospace" fontSize="8" fontWeight="bold" fill="#333">64</text>
          </svg>
        </Task>
        <Task open>
          <svg width="32" height="32" viewBox="0 0 32 32">
            <circle cx="16" cy="16" r="15.500" fill="#6db33f" />
            <path d="M6 9l4-1 2 10c1 5 6 5 6 0L16 8l4-1 3 12c.5 2 2 2 3.500 1v3c-3 2.500-6 1.500-7-1-2 3-5 3-7 1.500L14 30l-3 1z" fill="#f4f8ef" />
          </svg>
        </Task>
        <Task open>
          <svg width="32" height="32" viewBox="0 0 32 32">
            <rect x=".5" y=".5" width="31" height="31" rx="3" fill="#f47c20" stroke="#c05a12" />
            <path d="M10 6.500h4v5h4v-5h4c6 0 6 7.500 1.500 9.500 4.500 2 4.500 9.500-1.500 9.500s-4-5-6-5-0 5-6 5-6-7.500-1.500-9.500C4 14 4 6.500 10 6.500z" fill="none" stroke="#fff" strokeWidth="3.600" strokeLinejoin="round" />
          </svg>
        </Task>
        <Task>
          <svg width="30" height="30" viewBox="0 0 30 30">
            <circle cx="15" cy="15" r="15" fill="#f4f4f4" />
            <path d="M7.500 7l7.500 8.500L22.500 7M15 15v11" fill="none" stroke="#d6101c" strokeWidth="3.400" />
          </svg>
        </Task>
        <Task>
          <span className="flex h-[26px] w-[26px] items-center justify-center bg-[conic-gradient(from_45deg,#087cfa_0,#087cfa_33%,#b0449b_50%,#f97a12_72%,#fe2857_85%,#fe315d_96%,#5a6fe0)]">
            <span className="flex h-5 w-5 flex-col bg-black pl-[2px]">
              <span className="font-['Liberation_Mono',monospace] text-[11px] leading-[13px] font-bold">IJ</span>
              <span className="mt-[2px] h-[2px] w-2 bg-white" />
            </span>
          </span>
        </Task>
        <div className="ml-[2px] flex h-[39px] w-[60px] shrink-0">
          <span className="flex w-[51px] items-center justify-center rounded-[3px] border border-[#2b3a61] bg-[linear-gradient(160deg,#e3eaf8,#a9bde8_60%,#b4c6ec)] shadow-[inset_0_0_0_1px_#ffffffa0]">
            <span className="flex h-[25px] w-[30px] flex-col border-t-[3px] border-[#c5cad2] bg-black pt-[2px] pl-[3px] font-['Liberation_Mono',monospace] text-[9px] leading-[9px]">
              C:\_
            </span>
          </span>
          <span className="w-[4px] rounded-r-[3px] border border-l-0 border-[#56679a]" />
          <span className="w-[4px] rounded-r-[3px] border border-l-0 border-[#56679a]" />
        </div>
        <div className="ml-auto flex items-center">
          <svg width="8" height="5" viewBox="0 0 8 5" className="mr-[12px]" fill="#fff">
            <path d="M0 5 4 0l4 5z" />
          </svg>
          <svg width="17" height="14" viewBox="0 0 17 14" className="mr-[8px]" fill="none" stroke="#fff" strokeWidth="1.200">
            <path d="M1 4.500h2.500L7.500.5v13l-4-4H1z" fill="#fff" />
            <path d="M10 4.500c1.200 1.500 1.200 3.500 0 5M12 3c2 2.500 2 5.500 0 8M14 1.500c2.800 3.500 2.800 7.500 0 11" />
          </svg>
          <svg width="16" height="15" viewBox="0 0 16 15" className="mr-[8px]" fill="none" stroke="#fff" strokeWidth="1.400">
            <path d="M6 3.500h9v7H5.500M10 10.500V14M6.500 14h7M.7 1v4.500h4V1M2.700 1v3M2.700 5.500v7.500h2" />
          </svg>
          <svg width="16" height="15" viewBox="0 0 16 15" className="mr-[17px]" fill="#fff">
            <path d="M0 0h2v15H0zM2.500 1h5v1.500c2 1.500 4 .5 7.500 0-1 3-3 5.500-6.500 5l-1-1.500h-5z" />
          </svg>
          <div className="w-[56px] text-center text-[12px] leading-[17px] tracking-[-0.7px] whitespace-nowrap">
            <div>21:48</div>
            <div>16.05.2020</div>
          </div>
          <div className="ml-[11px] h-[38px] w-[14px] border border-[#8593b3] bg-[linear-gradient(#5a6a8e,#1d2c50_50%,#2c4173)]" />
        </div>
      </div>
    </div>
  );
}

export default function App() {
  return (
    <div className="flex h-[1024px] w-[1280px] flex-col overflow-hidden bg-white">
      <div className={"flex h-[984px] shrink-0 " + UI}>
        <Sidebar />
        <div className="flex w-[1240px] flex-col">
          <TabStrip />
          <AddressBar />
          <Bookmarks />
          <JenkinsPage />
        </div>
      </div>
      <Taskbar />
    </div>
  );
}
